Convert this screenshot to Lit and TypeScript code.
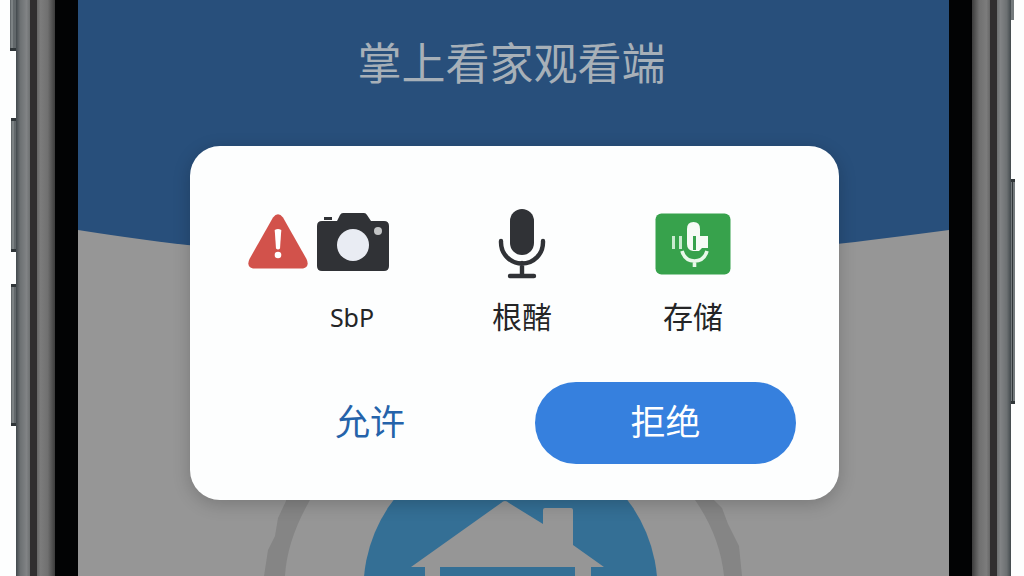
import { LitElement, html, css, svg } from "lit";
import { customElement } from "lit/decorators.js";

const warning = svg`<svg class="icon" width="62" height="58" viewBox="0 0 62 58" aria-hidden="true">
  <path d="M26 4.500Q31 -2 36 4.500L59.500 46Q63 53.500 56 55.500H6Q-1 53.500 2.500 46Z" fill="#d2524b"/>
  <path d="M27.700 17Q31 15 34.300 17L33 35.500Q31 37.500 29 35.500Z" fill="#fff"/>
  <circle cx="31" cy="42" r="3.300" fill="#fff"/>
</svg>`;

const camera = svg`<svg class="icon" width="72" height="58" viewBox="0 0 72 58" aria-hidden="true">
  <path d="M7 4h8v3H7z" fill="#303236"/>
  <path d="M5 8h15l3-6q1-2 3-2h21q2 0 3 2l4 6h13q5 0 5 5v40q0 5-5 5H5q-5 0-5-5V13q0-5 5-5Z" fill="#303236"/>
  <circle cx="36" cy="32" r="16" fill="#e9ecf3"/>
  <circle cx="61" cy="18" r="4" fill="#c3c5c6"/>
</svg>`;

const microphone = svg`<svg class="icon" width="48" height="70" viewBox="0 0 48 70" aria-hidden="true">
  <rect x="12" y="0" width="24" height="46" rx="12" fill="#303236"/>
  <path d="M3 32v1.500a21 21 0 0 0 42 0V32M24 54v12M12 67h24" fill="none" stroke="#303236" stroke-width="4.400" stroke-linecap="round"/>
</svg>`;

const storage = svg`<svg class="icon" width="76" height="62" viewBox="0 0 76 62" aria-hidden="true">
  <rect x="0.500" y="0.500" width="75" height="61" rx="6" fill="#37a24c"/>
  <path d="M17 23h3v13h-3zM24 23h3v13h-3z" fill="#c9ebcf"/>
  <path d="M32 16q0-7 6.500-7T45 16v7h8v12h-6l-3 3h-6q-6-1-6-7Z" fill="#f6fbf5"/>
  <path d="M38 23h3v14h-3z" fill="#37a24c"/>
  <path d="M27 38q3 10 12.500 10T52 38M39.500 48v6" fill="none" stroke="#e8f8e9" stroke-width="3.600"/>
</svg>`;

@customElement("phone-rail")
export class PhoneRail extends LitElement {
  static styles = css`
    :host { display: block; flex: none; width: 68px; }
    .rail { display: flex; height: 100%; }
    .keys { width: 6px; }
    .outer { width: 14px; background: linear-gradient(90deg, #42494d, #6c7072 30%, #818385 75%, #6d7071); }
    .seam { width: 7px; background: #302e2f; }
    .inner { width: 18px; background: linear-gradient(90deg, #666, #7c7c7c 20%, #707070 60%, #3c3c3c); }
    .bezel { width: 23px; background: #020304; }
  `;
  render() {
    return html`<div class="rail">
      <div class="keys"><slot></slot></div>
      <div class="outer"></div><div class="seam"></div><div class="inner"></div><div class="bezel"></div>
    </div>`;
  }
}

@customElement("permission-dialog")
export class PermissionDialog extends LitElement {
  static styles = css`
    :host { display: block; font-family: "Noto Sans", "Noto Sans CJK SC", sans-serif; }
    .dialog {
      box-sizing: border-box; background: #fdfefe; border-radius: 30px;
      padding: 62px 43px 36px; box-shadow: 0 4px 18px rgb(0 0 0 / 20%);
    }
    .permissions { display: grid; grid-template-columns: 218px 142px 200px; margin: 0; padding: 0; list-style: none; }
    .permission { display: flex; flex-direction: column; align-items: center; }
    .glyphs { display: flex; align-items: center; gap: 8px; height: 72px; }
    .wide .glyphs { box-sizing: border-box; align-self: flex-start; margin-left: 14px; padding-bottom: 4px; }
    .icon { display: block; flex: none; }
    .name { margin-top: 17px; font-size: 30px; line-height: 40px; color: #242526; white-space: nowrap; }
    .latin { font-size: 25px; padding-left: 20px; }
    .actions { display: grid; grid-template-columns: 274px 1fr; gap: 28px; margin-top: 45px; }
    .action {
      height: 82px; padding: 0 0 6px; border: 0; border-radius: 41px; background: transparent;
      font: 35px/48px "Noto Sans CJK SC", sans-serif; color: #2563aa; cursor: pointer;
    }
    .deny { background: #3680de; color: #fff; }
  `;
  render() {
    return html`<div class="dialog" role="dialog" aria-modal="true">
      <ul class="permissions">
        <li class="permission wide"><div class="glyphs">${warning}${camera}</div><span class="name latin">SbP</span></li>
        <li class="permission"><div class="glyphs">${microphone}</div><span class="name">根醏</span></li>
        <li class="permission"><div class="glyphs">${storage}</div><span class="name">存储</span></li>
      </ul>
      <div class="actions">
        <button class="action" type="button">允许</button>
        <button class="action deny" type="button">拒绝</button>
      </div>
    </div>`;
  }
}

@customElement("app-root")
export class AppRoot extends LitElement {
  static styles = css`
    :host { display: block; min-height: 100vh; background: #fdfefe; }
    .phone { box-sizing: border-box; display: flex; height: 100vh; min-height: 576px; padding: 0 7px 0 10px; overflow: hidden; }
    .right { transform: scaleX(-1); }
    .keyshape { display: block; width: 6px; height: 576px; }
    .screen { flex: 1; min-width: 0; display: grid; grid-template-columns: 100%; background: #969696; overflow: hidden; }
    .scene, .content { grid-area: 1 / 1; }
    .scene { display: flex; flex-direction: column; justify-content: space-between; }
    .hero { display: block; width: 100%; height: 250px; }
    .logo { display: block; align-self: center; width: 500px; height: 96px; }
    .content { z-index: 1; display: flex; flex-direction: column; }
    .title {
      margin: 0; padding: 28px 4px 52px 0; text-align: center; color: #a7b0b8;
      font: 400 44px/66px "Noto Sans CJK SC", sans-serif;
    }
    .panel { margin: 0 110px 0 112px; }
  `;
  render() {
    return html`<main class="phone">
      <phone-rail>
        <svg class="keyshape" viewBox="0 0 6 576" aria-hidden="true">
          <path d="M0 0h6v50H0zM1 118h5v134H1zM1 284h5v142H1z" fill="#62686b"/>
          <path d="M0 48h6v3H0zM1 118h5v3H1zM1 249h5v3H1zM1 284h5v3H1zM1 423h5v3H1z" fill="#303639"/>
          <path d="M1 0h2v48H1zM2 121h2v128H2zM2 287h2v136H2z" fill="#7c8284"/>
        </svg>
      </phone-rail>
      <section class="screen">
        <div class="scene">
          <svg class="hero" viewBox="0 0 871 250" preserveAspectRatio="none" aria-hidden="true">
            <path d="M0 0h871v230Q780 242 740 246Q435 274 120 246Q70 241 0 230Z" fill="#284f7b"/>
          </svg>
          <svg class="logo" viewBox="14 0 500 96" aria-hidden="true">
            <path d="M38 0 36 21 28 38 25 56 18 70 14 96H35Q37 60 60 20V0ZM438 0 445 20Q470 56 474 96H492L489 66 478 44 472 28 464 20 450 0Z" fill="#858585"/>
            <circle cx="260.500" cy="109" r="147" fill="#346f95"/>
            <path d="M161 87 251 23Q255 19 259 23L293 44V30Q293 28 295 28H321Q323 28 323 30V65L354 87H341V96H325V87H190V96H175V87Z" fill="#969696"/>
          </svg>
        </div>
        <div class="content">
          <h1 class="title">掌上看家观看端</h1>
          <permission-dialog class="panel"></permission-dialog>
        </div>
      </section>
      <phone-rail class="right">
        <svg class="keyshape" viewBox="0 0 6 576" aria-hidden="true">
          <path d="M3 0h3v20H3zM2 179h4v225H2z" fill="#747a7d"/>
          <path d="M2 179h4v3H2zM2 401h4v3H2zM4 182h1v219H4z" fill="#303639"/>
        </svg>
      </phone-rail>
    </main>`;
  }
}
